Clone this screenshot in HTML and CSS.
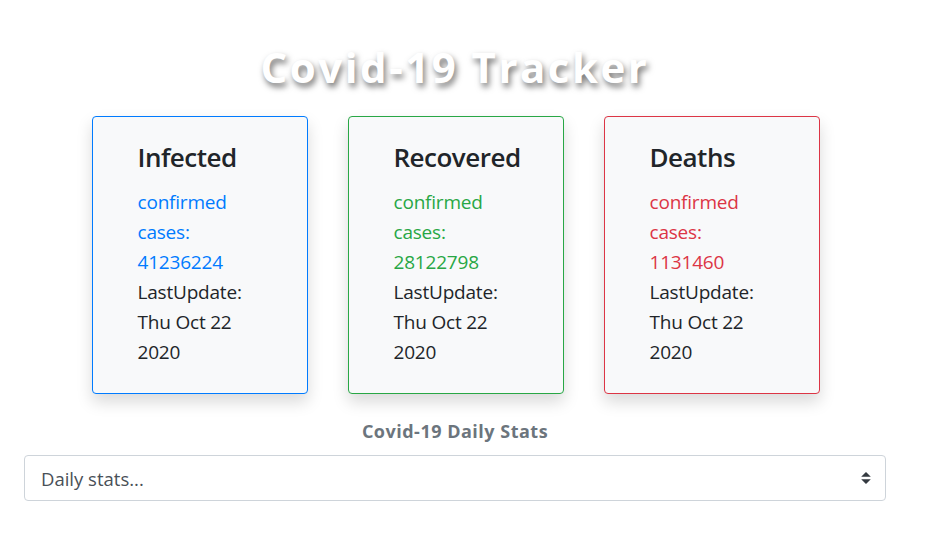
FILE: index.html
```html
<!DOCTYPE html>
<html>
<head>
<meta charset="utf-8">
<link rel="stylesheet" href="styles.css">
</head>
<body>
<div class="page">
  <h1 class="title">Covid-19 Tracker</h1>
  <div class="cards">
    <div class="card card-blue">
      <h3 class="card-title">Infected</h3>
      <p class="card-text"><span class="accent">confirmed cases: 41236224</span> LastUpdate: Thu Oct 22 2020</p>
    </div>
    <div class="card card-green">
      <h3 class="card-title">Recovered</h3>
      <p class="card-text"><span class="accent">confirmed cases: 28122798</span> LastUpdate: Thu Oct 22 2020</p>
    </div>
    <div class="card card-red">
      <h3 class="card-title">Deaths</h3>
      <p class="card-text"><span class="accent">confirmed cases: 1131460</span> LastUpdate: Thu Oct 22 2020</p>
    </div>
  </div>
  <h2 class="subtitle">Covid-19 Daily Stats</h2>
  <div class="select-wrap">
    <select class="select">
      <option>Daily stats...</option>
    </select>
    <svg class="select-arrow" width="10" height="12" viewBox="0 0 4 5"><path d="M2 0L0 2h4zm0 5L0 3h4z" fill="#343a40"/></svg>
  </div>
</div>
</body>
</html>
```

FILE: styles.css
```css
* { box-sizing: border-box; }
html, body { margin: 0; padding: 0; background: #fff; }
body {
  font-family: "Segoe UI", "Open Sans", "Noto Sans", sans-serif;
  color: #212529;
}
.page {
  width: 910px;
  padding: 0 24px;
}
.title {
  margin: 39px 0 0;
  text-align: center;
  font-size: 42px;
  line-height: 56px;
  letter-spacing: 2.5px;
  font-weight: 700;
  color: #fff;
  text-shadow: 2px 4px 6px rgba(0,0,0,0.55);
}
.cards {
  display: flex;
  justify-content: center;
  gap: 40px;
  margin-top: 21px;
  padding-left: 1px;
}
.card {
  width: 216px;
  background: #f8f9fa;
  border: 1px solid;
  border-radius: 4px;
  padding: 24px 45px 26px 45px;
  box-shadow: 0 8px 16px rgba(0,0,0,0.15);
}
.card-blue { border-color: #007bff; }
.card-green { border-color: #28a745; }
.card-red { border-color: #dc3545; }
.card-blue .accent { color: #007bff; }
.card-green .accent { color: #28a745; }
.card-red .accent { color: #dc3545; }
.card-title {
  margin: 0 0 14px;
  font-size: 26px;
  line-height: 32px;
  letter-spacing: -0.5px;
  font-weight: 600;
}
.card-text {
  margin: 0;
  font-size: 19px;
  line-height: 30px;
  letter-spacing: -0.2px;
}
.subtitle {
  margin: 25px 0 12px;
  text-align: center;
  font-size: 18px;
  line-height: 24px;
  letter-spacing: 0.5px;
  font-weight: 700;
  color: #6c757d;
}
.select-wrap {
  position: relative;
}
.select {
  display: block;
  width: 100%;
  height: 46px;
  appearance: none;
  -webkit-appearance: none;
  background: #fff;
  border: 1px solid #ced4da;
  border-radius: 4px;
  padding: 0 16px;
  font-family: inherit;
  font-size: 18.5px;
  color: #495057;
}
.select-arrow {
  position: absolute;
  right: 15px;
  top: 17px;
}
```
